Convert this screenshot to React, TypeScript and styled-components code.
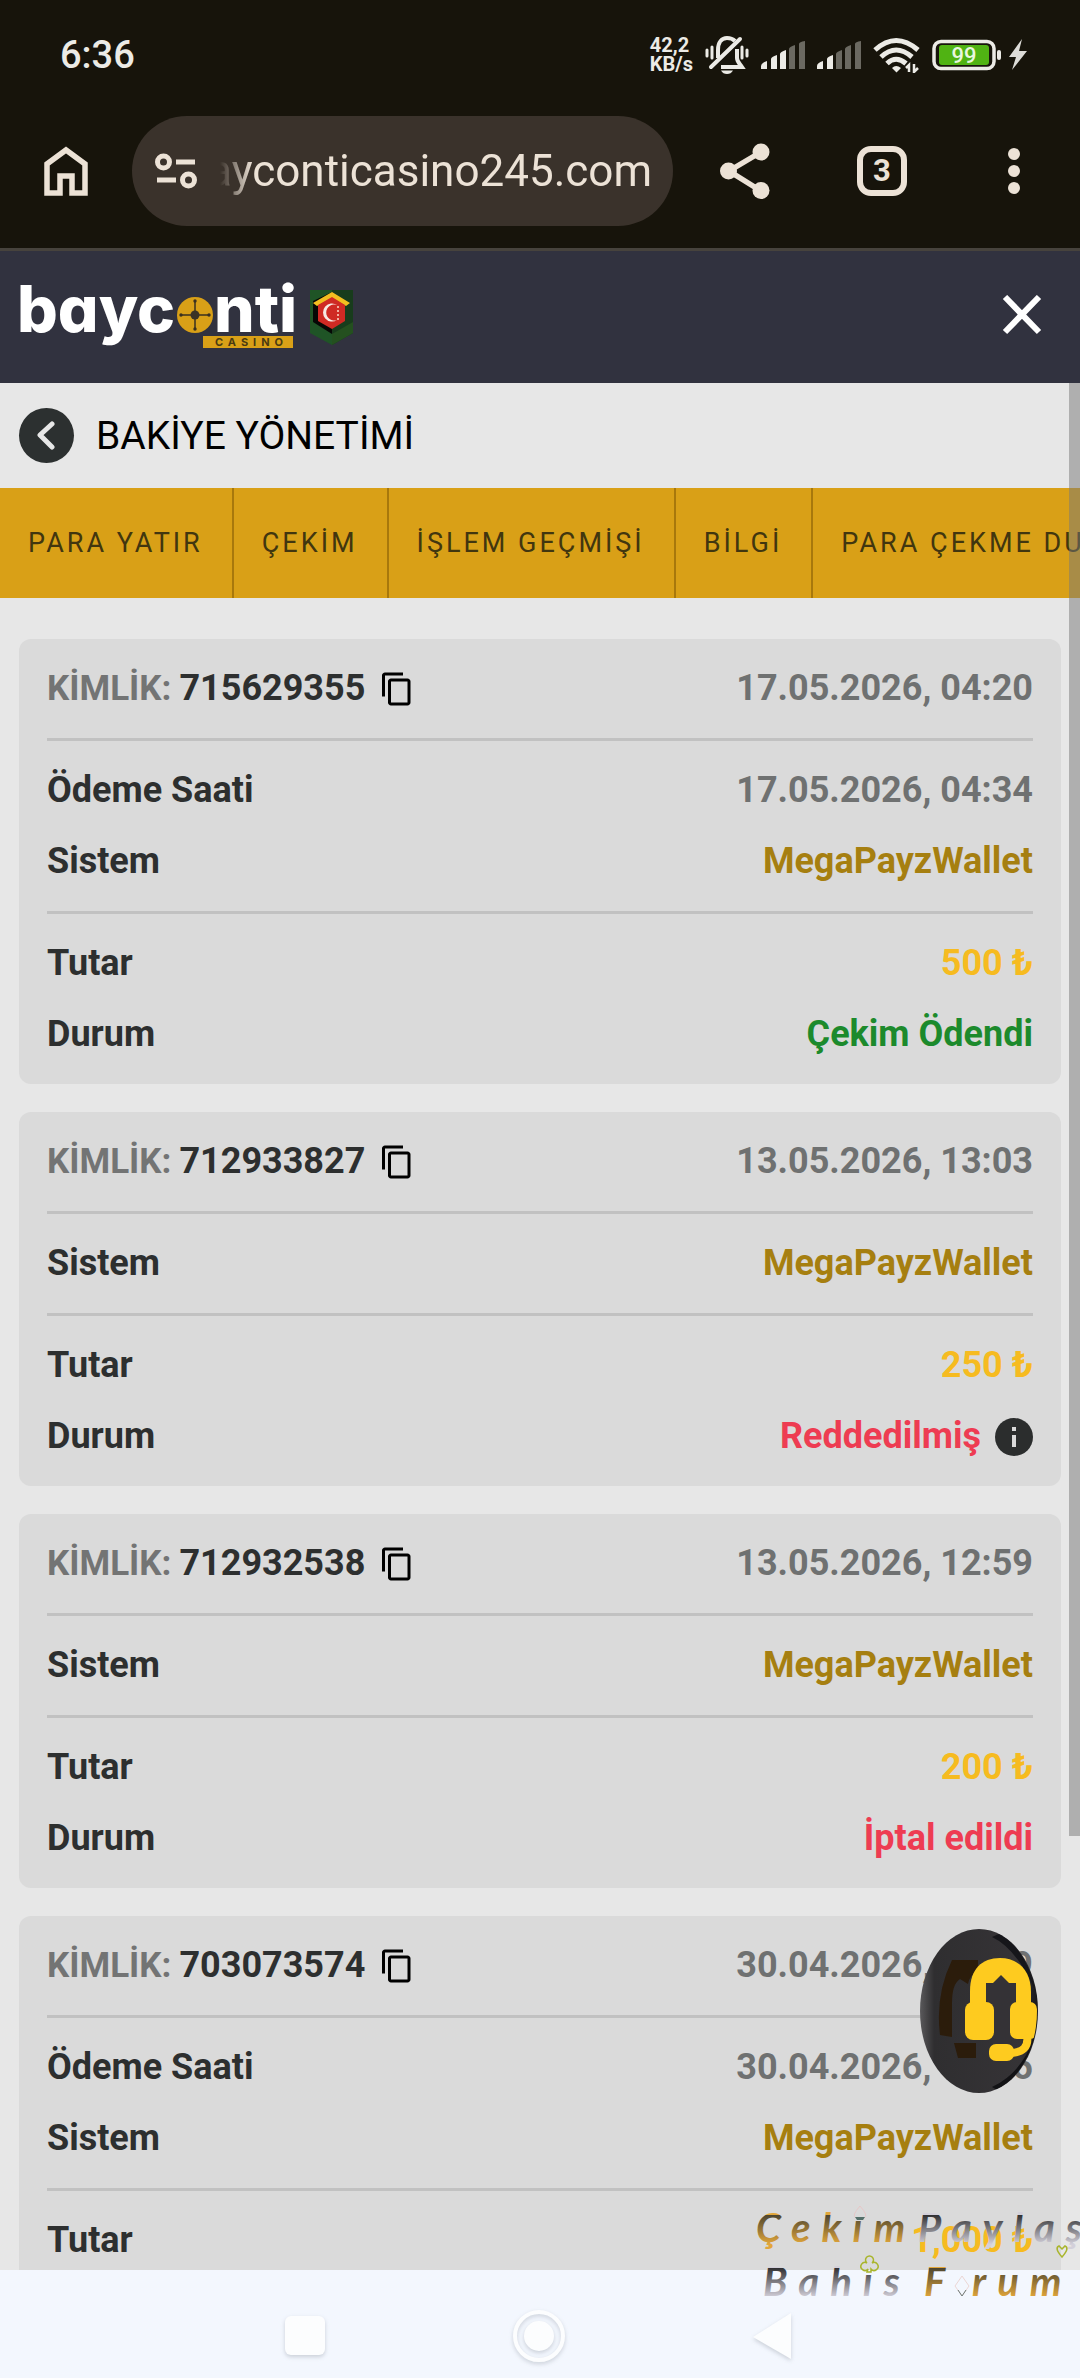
import React from 'react';
import styled, { createGlobalStyle } from 'styled-components';
import { MdContentCopy } from 'react-icons/md';

const GlobalStyle = createGlobalStyle`
  * {
    box-sizing: border-box;
  }

  body {
    margin: 0;
    background: #e7e7e7;
    font-family: Roboto, 'Liberation Sans', sans-serif;
  }

  button {
    padding: 0;
    background: transparent;
    border: none;
    font-family: inherit;
    cursor: pointer;
  }

  svg {
    display: block;
    flex: none;
  }
`;

const Phone = styled.div`
  position: relative;
  display: flex;
  flex-direction: column;
  width: 100%;
  height: 100vh;
  overflow: hidden;
`;

const StatusBar = styled.div`
  flex: none;
  display: flex;
  justify-content: space-between;
  align-items: center;
  height: 110px;
  padding: 0 53px 0 60px;
  background: #17140b;
  color: #ecebe6;
`;

const Clock = styled.time`
  font-weight: 500;
  font-size: 38px;
  line-height: 44px;
`;

const StatusIcons = styled.div`
  display: flex;
  align-items: center;
  gap: 12px;
`;

const Speed = styled.div`
  font-weight: 700;
  font-size: 20px;
  line-height: 19px;
`;

const Toolbar = styled.div`
  flex: none;
  display: flex;
  align-items: center;
  padding: 6px 0 22px;
  background: #17140b;
  border-bottom: 3px solid #47433d;
`;

const ToolbarButton = styled.button<{ $width: number }>`
  flex: none;
  display: flex;
  justify-content: center;
  align-items: center;
  width: ${({ $width }) => $width}px;
  height: 110px;
  color: #ece2d6;
`;

const TabCount = styled.span`
  display: flex;
  justify-content: center;
  align-items: center;
  width: 50px;
  height: 50px;
  border: 6px solid #ece2d6;
  border-radius: 14px;
  font-weight: 700;
  font-size: 31px;
  line-height: 36px;
`;

const Omnibox = styled.label`
  flex: 1;
  min-width: 0;
  display: flex;
  align-items: center;
  gap: 23px;
  height: 110px;
  padding: 0 21px 0 23px;
  background: #3a322b;
  border-radius: 55px;
  color: #ece2d6;
`;

const Address = styled.input`
  flex: 1;
  min-width: 0;
  padding: 0;
  background: transparent;
  border: none;
  outline: none;
  color: #ece2d6;
  direction: rtl;
  font-family: inherit;
  font-size: 44px;
  line-height: 56px;
  mask-image: linear-gradient(to right, transparent, #000 32px);
`;

const SiteHeader = styled.header`
  flex: none;
  display: flex;
  justify-content: space-between;
  align-items: center;
  height: 132px;
  padding: 0 36px 0 18px;
  background: #31323f;
`;

const LogoLink = styled.a`
  display: flex;
  align-items: center;
  gap: 14px;
`;

const LogoWord = styled.text`
  font-family: Inter, sans-serif;
  font-weight: 800;
  font-size: 64px;
  font-feature-settings: 'cv11';
  fill: #fff;
`;

const LogoTag = styled.text`
  font-family: Inter, sans-serif;
  font-weight: 700;
  font-size: 11px;
  letter-spacing: 5px;
  fill: #4a3a12;
`;

const Scroller = styled.main`
  position: relative;
  flex: 1;
  min-height: 0;
  overflow: hidden;
  background: #e7e7e7;
`;

const ScrollThumb = styled.div`
  position: absolute;
  top: 0;
  right: 0;
  width: 11px;
  height: 77%;
  background: rgba(120, 120, 120, 0.5);
`;

const TitleBar = styled.div`
  display: flex;
  align-items: center;
  gap: 22px;
  height: 105px;
  padding: 0 19px;
`;

const BackButton = styled.button`
  display: flex;
  justify-content: center;
  align-items: center;
  width: 55px;
  height: 55px;
  background: #2c3030;
  border-radius: 50%;
`;

const Title = styled.h1`
  margin: 0;
  color: #000;
  font-weight: 400;
  font-size: 39px;
  line-height: 48px;
`;

const Tabs = styled.nav`
  display: flex;
  height: 110px;
  overflow: hidden;
  background: #d9a017;
`;

const Tab = styled.a`
  flex: none;
  display: flex;
  align-items: center;
  padding: 0 29px 0 28px;
  border-right: 2px solid #a8780c;
  color: #41360f;
  font-size: 27px;
  line-height: 36px;
  letter-spacing: 3px;
  text-decoration: none;
  white-space: nowrap;
`;

const CardList = styled.div`
  display: flex;
  flex-direction: column;
  gap: 28px;
  padding: 41px 19px;
`;

const Card = styled.article`
  background: #dadada;
  border-radius: 12px;
  padding: 0 28px;
`;

const Group = styled.dl`
  display: flex;
  flex-direction: column;
  gap: 28px;
  margin: 0;
  padding: 28px 0;

  & + & {
    border-top: 3px solid #c1c1c1;
  }
`;

const Row = styled.div`
  display: flex;
  justify-content: space-between;
  align-items: center;
  height: 43px;
  font-weight: 700;
  font-size: 36px;
  line-height: 43px;
  color: #2d2f2f;
`;

const Label = styled.dt`
  display: flex;
  align-items: center;
`;

const Muted = styled.span`
  margin-right: 8px;
  color: #737474;
  font-size: 35px;
`;

const CopyButton = styled.button`
  margin-left: 14px;
  color: #000;
`;

const Value = styled.dd<{ $color: string }>`
  display: flex;
  align-items: center;
  gap: 14px;
  margin: 0;
  color: ${({ $color }) => $color};
`;

const InfoButton = styled.button`
  display: block;
`;

const SupportButton = styled.button`
  position: absolute;
  right: 41px;
  bottom: 174px;
`;

const NavBar = styled.div`
  flex: none;
  display: flex;
  justify-content: center;
  align-items: center;
  gap: 178px;
  height: 108px;
  padding-top: 24px;
  background: #f3f7fe;
`;

const NavButton = styled.button`
  width: 56px;
  height: 56px;

  svg {
    overflow: visible;
    filter: drop-shadow(0 2px 2px rgba(60, 70, 80, 0.22));
  }
`;

const Watermark = styled.svg`
  position: absolute;
  right: 0;
  bottom: 73px;
  pointer-events: none;
`;

const WatermarkText = styled.text`
  font-family: Lato, sans-serif;
  font-weight: 700;
  font-style: italic;
  font-size: 40px;
  letter-spacing: 11px;
`;

const COLORS = {
	muted: '#6f7171',
	system: '#a67f10',
	amount: '#f6bb20',
	paid: '#1c8a2c',
	failed: '#ee3c52',
};

type Status = 'paid' | 'failed';

interface Transaction {
	id: string;
	date: string;
	paidAt?: string;
	system: string;
	amount: string;
	status: string;
	kind: Status;
	info?: boolean;
}

const TRANSACTIONS: Transaction[] = [
	{
		id: '715629355',
		date: '17.05.2026, 04:20',
		paidAt: '17.05.2026, 04:34',
		system: 'MegaPayzWallet',
		amount: '500 ₺',
		status: 'Çekim Ödendi',
		kind: 'paid',
	},
	{
		id: '712933827',
		date: '13.05.2026, 13:03',
		system: 'MegaPayzWallet',
		amount: '250 ₺',
		status: 'Reddedilmiş',
		kind: 'failed',
		info: true,
	},
	{
		id: '712932538',
		date: '13.05.2026, 12:59',
		system: 'MegaPayzWallet',
		amount: '200 ₺',
		status: 'İptal edildi',
		kind: 'failed',
	},
	{
		id: '703073574',
		date: '30.04.2026, 03:09',
		paidAt: '30.04.2026, 03:26',
		system: 'MegaPayzWallet',
		amount: '1,000 ₺',
		status: 'Çekim Ödendi',
		kind: 'paid',
	},
];

const TABS = ['PARA YATIR', 'ÇEKİM', 'İŞLEM GEÇMİŞİ', 'BİLGİ', 'PARA ÇEKME DURUMU'];

const SIGNAL_BARS = [
	'M0 28v-3q0-3 6-5v8z',
	'M10 28V18q0-2 6-4v14z',
	'M19 28V13q0-2 6-4v19z',
	'M28 28V8q0-2 6-4v24z',
	'M38 28V3q0-2 6-3v28z',
];

function Signal({ level }: { level: number }) {
	return (
		<svg width="44" height="28" viewBox="0 0 44 28">
			{SIGNAL_BARS.map((d, i) => (
				<path key={d} d={d} fill={i < level ? '#ecebe6' : '#6b6961'} />
			))}
		</svg>
	);
}

function MutedBell() {
	return (
		<svg width="44" height="38" viewBox="0 0 44 38" fill="none" stroke="#ecebe6" strokeWidth="4">
			<path d="M13 22V14C13 6 17 2 22 2c4 0 6 1 8 3" />
			<path d="M32 13v9c0 4 3 6 5 9H16" />
			<path d="M6 31L35 3" strokeLinecap="round" />
			<path d="M16 34.500h12q-2 3.500-6 3.500t-6-3.500z" fill="#ecebe6" stroke="none" />
			<path d="M2 14v6M7 11v11M37 11v11M42 14v6" strokeWidth="3" strokeLinecap="round" />
		</svg>
	);
}

function Wifi() {
	return (
		<svg width="47" height="36" viewBox="0 0 47 36">
			<g fill="none" stroke="#ecebe6" strokeWidth="5">
				<path d="M2 13Q23 -6 45 13" />
				<path d="M8 20Q23 6 39 20" />
				<path d="M14 26.500Q23 18 33 26.500" />
			</g>
			<path d="M19 31q4-4 9 0l-4.500 4.500z" fill="#ecebe6" />
			<path d="M36 35v-7l-3 3M41 27v8l4-4" stroke="#ecebe6" strokeWidth="2.500" fill="none" />
		</svg>
	);
}

function Battery() {
	return (
		<svg width="95" height="32" viewBox="0 0 95 32">
			<rect x="2" y="2.500" width="60" height="27" rx="7" fill="none" stroke="#ecebe6" strokeWidth="3.500" />
			<rect x="7" y="6" width="50" height="20" rx="3" fill="#50b313" />
			<rect x="65" y="11" width="4" height="10" rx="2" fill="#ecebe6" />
			<text x="32" y="24" fill="#e8f7df" fontSize="22" fontWeight="500" textAnchor="middle">99</text>
			<path d="M90 0L77 18h7l-4 13 15-19h-8z" fill="#dddcd8" />
		</svg>
	);
}

function Logo() {
	return (
		<svg width="278" height="104" viewBox="0 -14 278 104" role="img" aria-label="bayconti casino">
			<LogoWord x="-1" y="53">bayc</LogoWord>
			<g>
				<circle cx="177" cy="36" r="18" fill="#d9a017" />
				<path d="M163 36h28M177 22v28" stroke="#3a3020" strokeWidth="1.500" />
				<circle cx="177" cy="36" r="4.500" fill="#3a3226" />
				<circle cx="163" cy="36" r="1.700" fill="#3a3020" />
				<circle cx="191" cy="36" r="1.700" fill="#3a3020" />
				<circle cx="177" cy="22" r="1.700" fill="#3a3020" />
				<circle cx="177" cy="50" r="1.700" fill="#3a3020" />
			</g>
			<LogoWord x="196" y="53">nti</LogoWord>
			<rect x="185" y="57" width="90" height="12" fill="#d9a017" />
			<LogoTag x="197" y="67">CASINO</LogoTag>
		</svg>
	);
}

function Crest() {
	return (
		<svg width="44" height="58" viewBox="0 0 44 58">
			<path d="M0 2h43v43L22 57 0 45z" fill="#1f5426" />
			<path d="M22 2h21v43L22 57z" fill="#183c1c" />
			<path d="M22 46l21-12v11L22 57z" fill="#24501f" />
			<path d="M3 13l19-9v42L3 34z" fill="#060805" />
			<path d="M3 15L22 4l18 11-4 3-14-8-15 8z" fill="#f2bf20" />
			<path d="M8 17l14-8 13 8v16l-13 8-14-8z" fill="#cf2a24" />
			<path d="M27 17a9 9 0 1 0 0 15 8 8 0 1 1 0-15z" fill="#f6e9e4" />
			<path d="M28 18v14" stroke="#f0b0a0" strokeWidth="2" strokeDasharray="2 2" />
		</svg>
	);
}

function Headset() {
	return (
		<svg width="120" height="168" viewBox="-1 -1 120 168">
			<defs>
				<linearGradient id="disc" x1="0" x2="1">
					<stop offset="0" stopColor="#5a595b" />
					<stop offset="0.120" stopColor="#2f2e30" />
					<stop offset="0.850" stopColor="#353336" />
					<stop offset="1" stopColor="#17171b" />
				</linearGradient>
				<clipPath id="discClip">
					<ellipse cx="59" cy="82" rx="58" ry="82" />
				</clipPath>
			</defs>
			<ellipse cx="59" cy="82" rx="59" ry="82" fill="url(#disc)" />
			<g clipPath="url(#discClip)">
				<path d="M72 8q26 12 46 60V20L90 0z" fill="#16161a" />
				<path d="M72 158q30-14 42-50l6 28-34 30z" fill="#121215" />
				<path d="M32 31h26v12q-8 2-10 12l-8-5q-8 5-8 24v34l-12-2q-5-40 12-75z" fill="#2b1c0b" />
				<path d="M34 114h22v15H38z" fill="#2b1c0b" />
				<path d="M50 74V62c0-22 12-33 30-33s31 12 31 34v11z" fill="#fecb1f" />
				<path d="M66 76V54l7 0 8-8 8 8h7v22z" fill="#343236" />
				<path d="M74 74h16v30l2 12H72z" fill="#343236" />
				<rect x="45" y="73" width="29" height="38" rx="8" fill="#fecb1f" />
				<rect x="90" y="73" width="27" height="37" rx="7" fill="#fecb1f" />
				<path d="M107 106q3 18-18 18" stroke="#fecb1f" strokeWidth="8" fill="none" />
				<rect x="69" y="115" width="25" height="17" rx="7" fill="#fecb1f" />
			</g>
		</svg>
	);
}

function InfoRow({ label, color, children }: { label: string; color: string; children: React.ReactNode }) {
	return (
		<Row>
			<Label>{label}</Label>
			<Value $color={color}>{children}</Value>
		</Row>
	);
}

function TransactionCard({ item }: { item: Transaction }) {
	return (
		<Card>
			<Group>
				<Row>
					<Label>
						<Muted>{'KİMLİK:'}</Muted>
						{item.id}
						<CopyButton type="button" aria-label="Kopyala">
							<MdContentCopy size={36} />
						</CopyButton>
					</Label>
					<Value $color={COLORS.muted}>{item.date}</Value>
				</Row>
			</Group>
			<Group>
				{item.paidAt && (
					<InfoRow label="Ödeme Saati" color={COLORS.muted}>{item.paidAt}</InfoRow>
				)}
				<InfoRow label="Sistem" color={COLORS.system}>{item.system}</InfoRow>
			</Group>
			<Group>
				<InfoRow label="Tutar" color={COLORS.amount}>{item.amount}</InfoRow>
				<InfoRow label="Durum" color={COLORS[item.kind]}>
					{item.status}
					{item.info && (
						<InfoButton type="button" aria-label="Bilgi">
							<svg width="38" height="38" viewBox="0 0 38 38">
								<circle cx="19" cy="19" r="19" fill="#2b2d2d" />
								<path d="M17 9h4v4h-4zM17 17h4v12h-4z" fill="#dadada" />
							</svg>
						</InfoButton>
					)}
				</InfoRow>
			</Group>
		</Card>
	);
}

function App() {
	return (
		<Phone>
			<GlobalStyle />
			<StatusBar>
				<Clock>{'6:36'}</Clock>
				<StatusIcons>
					<Speed>
						<div>{'42,2'}</div>
						<div>{'KB/s'}</div>
					</Speed>
					<MutedBell />
					<Signal level={3} />
					<Signal level={2} />
					<Wifi />
					<Battery />
				</StatusIcons>
			</StatusBar>

			<Toolbar>
				<ToolbarButton $width={132} type="button" aria-label="Home">
					<svg width="44" height="50" viewBox="0 0 44 50">
						<path d="M3 47V18L22 4l19 14v29H28V30H16v17z" fill="none" stroke="currentColor" strokeWidth="5.500" />
					</svg>
				</ToolbarButton>
				<Omnibox>
					<svg width="42" height="36" viewBox="0 0 42 36" fill="none" stroke="currentColor" strokeWidth="5">
						<circle cx="8.500" cy="9" r="6" />
						<circle cx="33.500" cy="27" r="6" />
						<path d="M21 9h19M2 27h19" />
					</svg>
					<Address type="text" aria-label="Address" defaultValue="bayconticasino245.com" />
				</Omnibox>
				<ToolbarButton $width={144} type="button" aria-label="Share">
					<svg width="50" height="56" viewBox="0 0 50 56">
						<path d="M41 9L9 28l32 20" fill="none" stroke="currentColor" strokeWidth="5.500" />
						<circle cx="41" cy="9" r="8.500" fill="currentColor" />
						<circle cx="8.500" cy="28" r="8.500" fill="currentColor" />
						<circle cx="41" cy="47.500" r="8.500" fill="currentColor" />
					</svg>
				</ToolbarButton>
				<ToolbarButton $width={130} type="button" aria-label="Tabs">
					<TabCount>{'3'}</TabCount>
				</ToolbarButton>
				<ToolbarButton $width={133} type="button" aria-label="Menu">
					<svg width="12" height="46" viewBox="0 0 12 46" fill="currentColor">
						<circle cx="6" cy="6" r="6" />
						<circle cx="6" cy="23" r="6" />
						<circle cx="6" cy="40" r="6" />
					</svg>
				</ToolbarButton>
			</Toolbar>

			<SiteHeader>
				<LogoLink href="#">
					<Logo />
					<Crest />
				</LogoLink>
				<button type="button" aria-label="Kapat">
					<svg width="44" height="44" viewBox="0 0 44 44">
						<path d="M5 2l34 35M39 2L5 37" stroke="#fff" strokeWidth="6" />
					</svg>
				</button>
			</SiteHeader>

			<Scroller>
				<TitleBar>
					<BackButton type="button" aria-label="Geri">
						<svg width="20" height="32" viewBox="0 0 20 32">
							<path d="M15 4L3 15l12 12" fill="none" stroke="#e7e7e7" strokeWidth="5" strokeLinecap="round" strokeLinejoin="round" />
						</svg>
					</BackButton>
					<Title>{'BAKİYE YÖNETİMİ'}</Title>
				</TitleBar>
				<Tabs>
					{TABS.map((tab) => (
						<Tab key={tab} href="#">{tab}</Tab>
					))}
				</Tabs>
				<CardList>
					{TRANSACTIONS.map((item) => (
						<TransactionCard key={item.id} item={item} />
					))}
				</CardList>
				<SupportButton type="button" aria-label="Canlı destek">
					<Headset />
				</SupportButton>
				<ScrollThumb />
			</Scroller>

			<NavBar>
				<NavButton type="button" aria-label="Recent apps">
					<svg width="56" height="56" viewBox="0 0 56 56">
						<rect x="7" y="8" width="40" height="39" rx="6" fill="#fcfdfe" />
					</svg>
				</NavButton>
				<NavButton type="button" aria-label="Home screen">
					<svg width="56" height="56" viewBox="0 0 56 56">
						<circle cx="27" cy="28" r="24" fill="none" stroke="#fcfdfe" strokeWidth="4" />
						<circle cx="27" cy="28" r="15" fill="#fcfdfe" />
					</svg>
				</NavButton>
				<NavButton type="button" aria-label="Back">
					<svg width="56" height="56" viewBox="0 0 56 56">
						<path d="M7 29L45 5v46z" fill="#fcfdfe" />
					</svg>
				</NavButton>
			</NavBar>

			<Watermark width="330" height="110" viewBox="0 0 330 110">
				<defs>
					{/* one top-to-bottom sweep per text line */}
					<linearGradient id="gold" gradientUnits="userSpaceOnUse" x1="0" y1="20" x2="0" y2="73" spreadMethod="repeat">
						<stop offset="0" stopColor="#4c4530" />
						<stop offset="0.550" stopColor="#e2a63a" />
						<stop offset="1" stopColor="#e2a63a" />
					</linearGradient>
					<linearGradient id="silver" gradientUnits="userSpaceOnUse" x1="0" y1="20" x2="0" y2="73" spreadMethod="repeat">
						<stop offset="0" stopColor="#303032" />
						<stop offset="0.550" stopColor="#d3d0da" />
						<stop offset="1" stopColor="#d3d0da" />
					</linearGradient>
				</defs>
				<WatermarkText x="6" y="47" fill="url(#gold)">Çekım</WatermarkText>
				<WatermarkText x="168" y="47" fill="url(#silver)">Paylaş</WatermarkText>
				<WatermarkText x="13" y="101" fill="url(#silver)">Bahıs</WatermarkText>
				<WatermarkText x="174" y="101" fill="url(#gold)">F</WatermarkText>
				<WatermarkText x="222" y="101" fill="url(#gold)">rum</WatermarkText>
				<path d="M110 11q-9 10-4 12h8q5-2-4-12z" fill="none" stroke="#e6c8c8" />
				<path d="M105 22h10l-2 3h-6z" fill="#55706a" />
				<path d="M121 77h-4l1-3a4 4 0 1 1-1-6 4 4 0 1 1 5 0 4 4 0 1 1-1 6z" fill="none" stroke="#a9b52c" strokeWidth="1.500" />
				<path d="M312 62q-8-9-3-11l3 3 3-3q5 2-3 11z" fill="none" stroke="#a9b52c" strokeWidth="1.500" />
				<path d="M212 81l7 10-7 10-7-10z" fill="none" stroke="#ecd6d4" />
				<path d="M208 95l4 6 4-6" fill="none" stroke="#6d7a78" />
			</Watermark>
		</Phone>
	);
}

export default App;
